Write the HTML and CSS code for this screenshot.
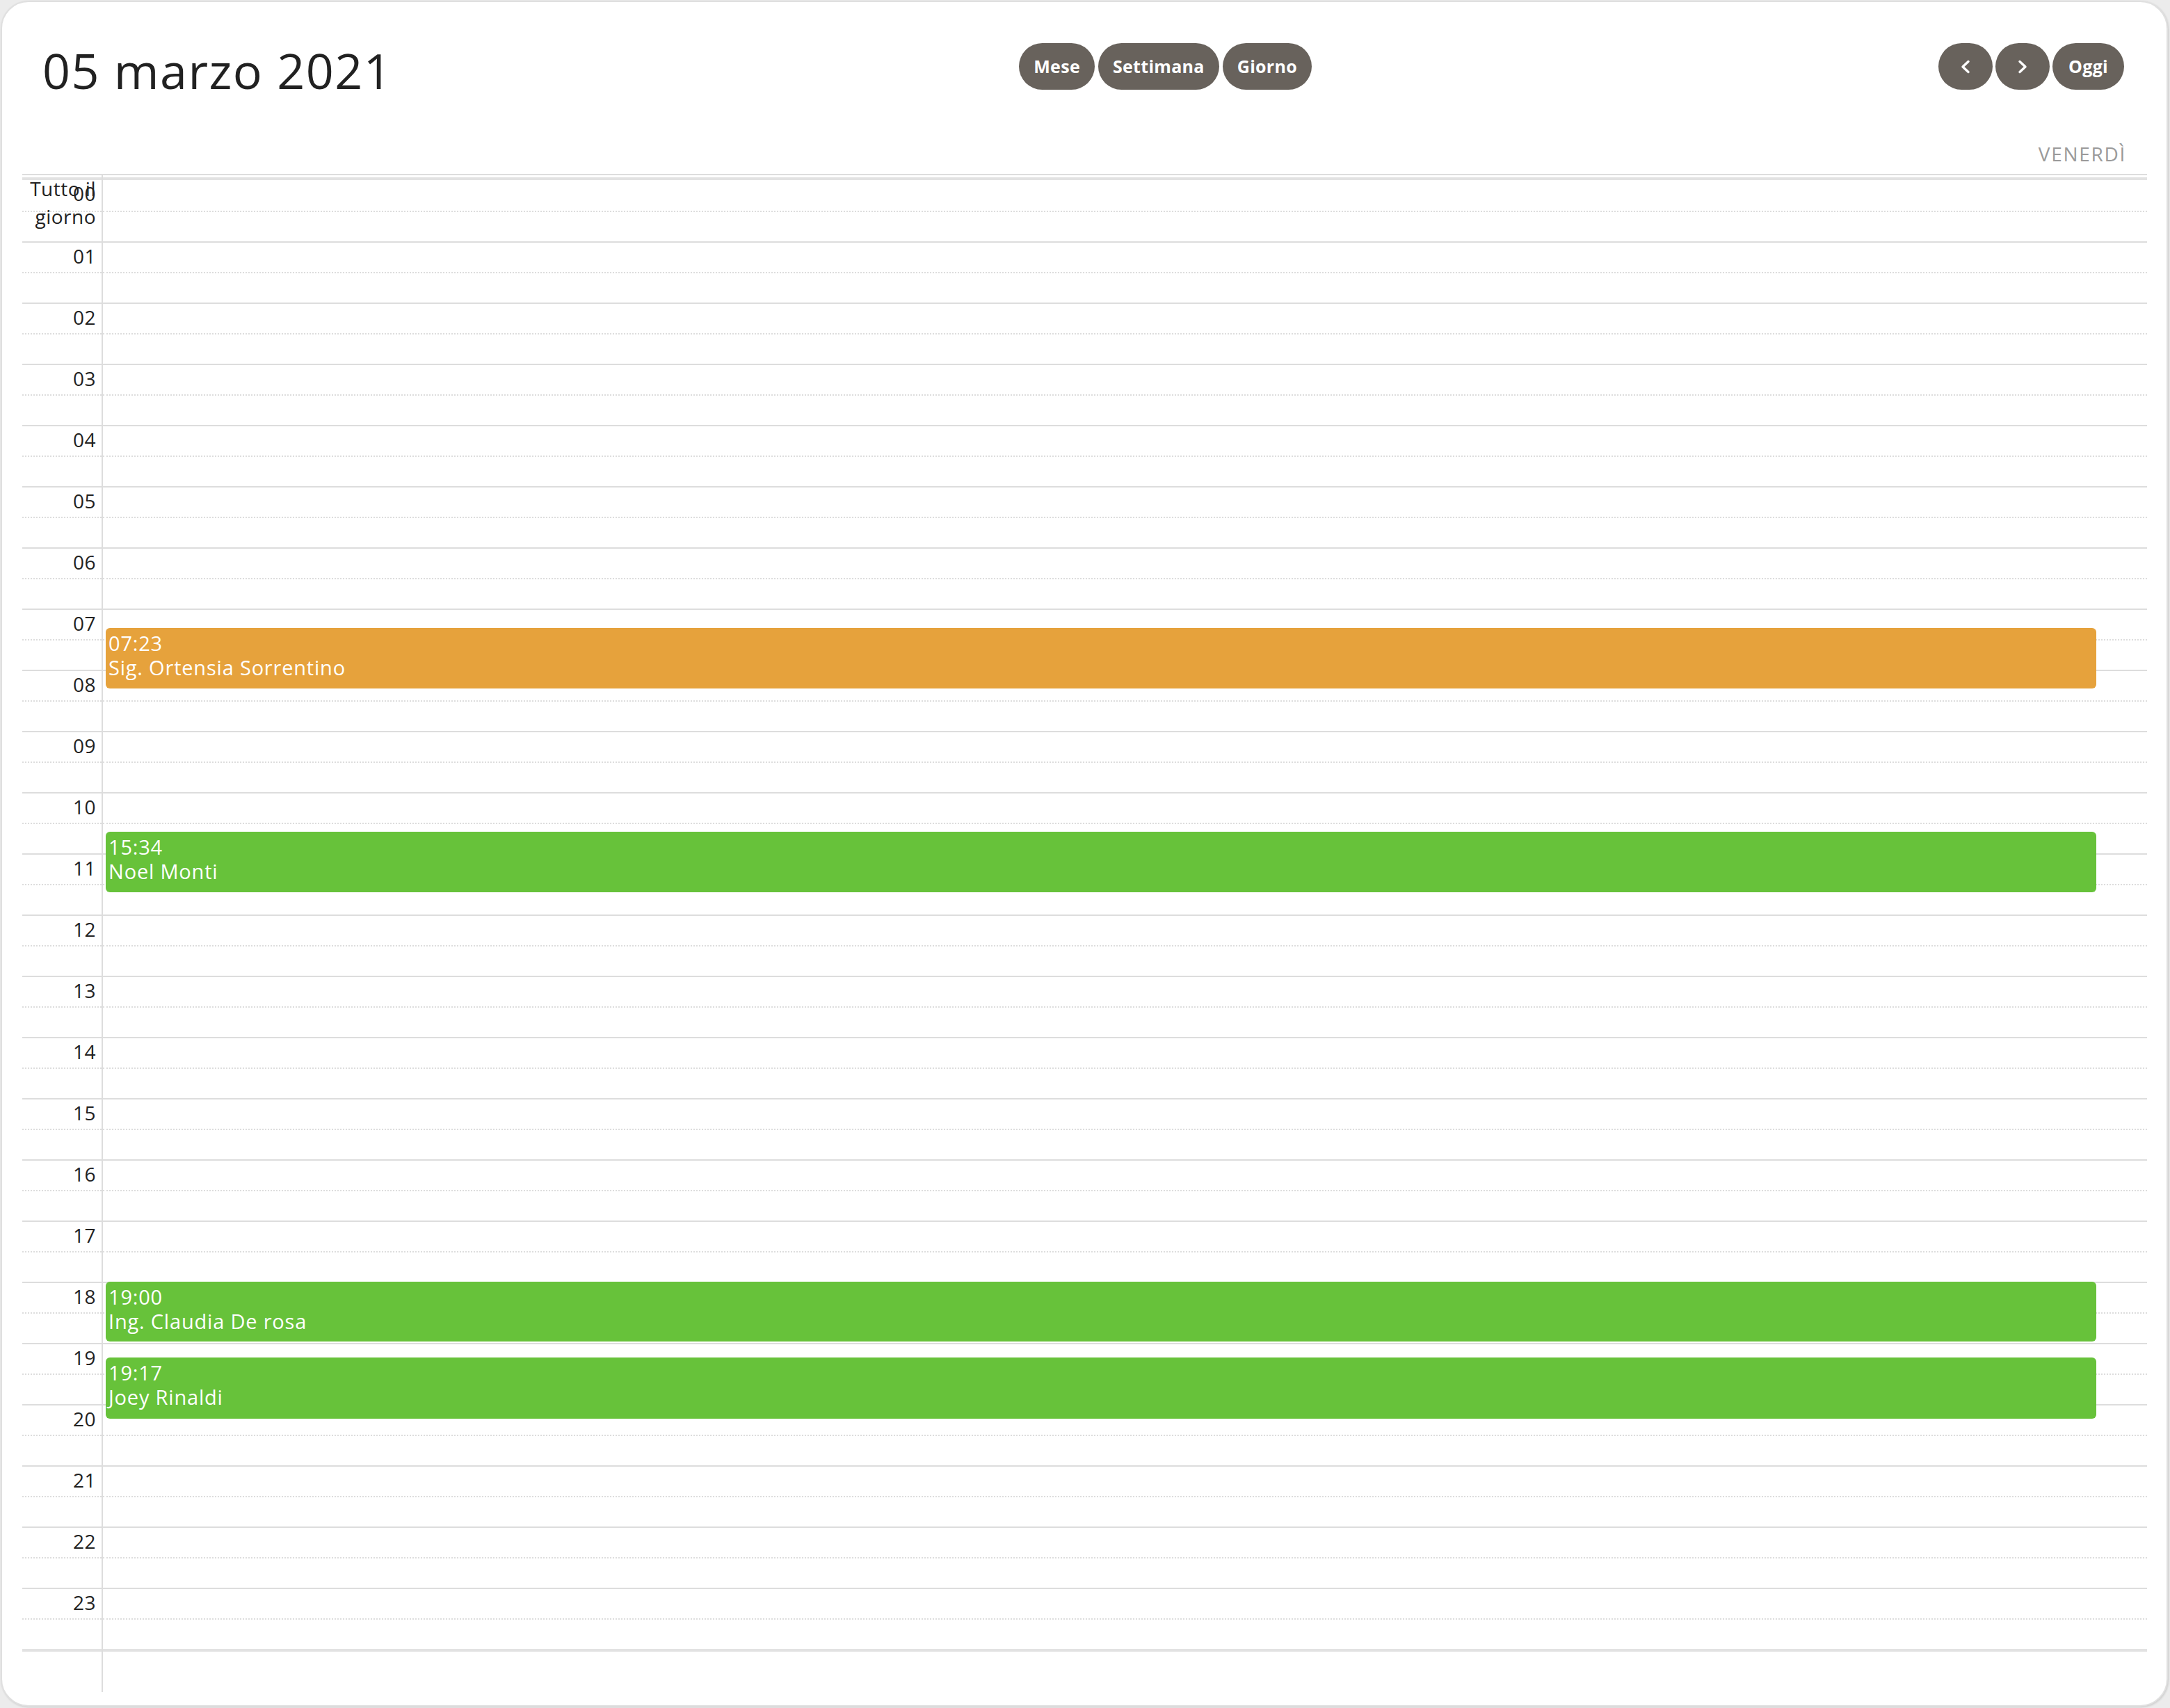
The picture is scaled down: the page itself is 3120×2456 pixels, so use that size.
FILE: index.html
```html
<!DOCTYPE html>
<html lang="it">
<head>
<meta charset="utf-8">
<title>Calendario</title>
<link rel="stylesheet" href="styles.css">
</head>
<body>
<div class="card">
  <div class="toolbar">
    <h2 class="title">05 marzo 2021</h2>
    <div class="btn-group">
      <button class="btn">Mese</button>
      <button class="btn">Settimana</button>
      <button class="btn">Giorno</button>
    </div>
    <div class="btn-group nav">
      <button class="btn btn-icon" aria-label="prev"><svg width="16" height="20" viewBox="0 0 16 20"><path d="M12 2.5 L4 10 L12 17.5" fill="none" stroke="#fff" stroke-width="3.4" stroke-linecap="round" stroke-linejoin="round"/></svg></button>
      <button class="btn btn-icon" aria-label="next"><svg width="16" height="20" viewBox="0 0 16 20"><path d="M4 2.5 L12 10 L4 17.5" fill="none" stroke="#fff" stroke-width="3.4" stroke-linecap="round" stroke-linejoin="round"/></svg></button>
      <button class="btn btn-today">Oggi</button>
    </div>
  </div>
  <div class="grid">
    <div class="col-header">VENERDÌ</div>
    <div class="tg-body">
      <div class="axis">
        <div class="allday">Tutto il<br>giorno</div>
        <div class="gap"></div><div class="divider"></div>
        <div class="hour h0"><div class="half top"><span class="label">00</span></div><div class="half bot"></div></div>
        <div class="hour"><div class="half top"><span class="label">01</span></div><div class="half bot"></div></div>
        <div class="hour"><div class="half top"><span class="label">02</span></div><div class="half bot"></div></div>
        <div class="hour"><div class="half top"><span class="label">03</span></div><div class="half bot"></div></div>
        <div class="hour"><div class="half top"><span class="label">04</span></div><div class="half bot"></div></div>
        <div class="hour"><div class="half top"><span class="label">05</span></div><div class="half bot"></div></div>
        <div class="hour"><div class="half top"><span class="label">06</span></div><div class="half bot"></div></div>
        <div class="hour"><div class="half top"><span class="label">07</span></div><div class="half bot"></div></div>
        <div class="hour"><div class="half top"><span class="label">08</span></div><div class="half bot"></div></div>
        <div class="hour"><div class="half top"><span class="label">09</span></div><div class="half bot"></div></div>
        <div class="hour"><div class="half top"><span class="label">10</span></div><div class="half bot"></div></div>
        <div class="hour"><div class="half top"><span class="label">11</span></div><div class="half bot"></div></div>
        <div class="hour"><div class="half top"><span class="label">12</span></div><div class="half bot"></div></div>
        <div class="hour"><div class="half top"><span class="label">13</span></div><div class="half bot"></div></div>
        <div class="hour"><div class="half top"><span class="label">14</span></div><div class="half bot"></div></div>
        <div class="hour"><div class="half top"><span class="label">15</span></div><div class="half bot"></div></div>
        <div class="hour"><div class="half top"><span class="label">16</span></div><div class="half bot"></div></div>
        <div class="hour"><div class="half top"><span class="label">17</span></div><div class="half bot"></div></div>
        <div class="hour"><div class="half top"><span class="label">18</span></div><div class="half bot"></div></div>
        <div class="hour"><div class="half top"><span class="label">19</span></div><div class="half bot"></div></div>
        <div class="hour"><div class="half top"><span class="label">20</span></div><div class="half bot"></div></div>
        <div class="hour"><div class="half top"><span class="label">21</span></div><div class="half bot"></div></div>
        <div class="hour"><div class="half top"><span class="label">22</span></div><div class="half bot"></div></div>
        <div class="hour"><div class="half top"><span class="label">23</span></div><div class="half bot"></div></div>
        <div class="end"></div>
      </div>
      <div class="lane">
        <div class="gap"></div><div class="divider"></div>
        <div class="hour h0"><div class="half top"></div><div class="half bot"></div></div>
        <div class="hour"><div class="half top"></div><div class="half bot"></div></div>
        <div class="hour"><div class="half top"></div><div class="half bot"></div></div>
        <div class="hour"><div class="half top"></div><div class="half bot"></div></div>
        <div class="hour"><div class="half top"></div><div class="half bot"></div></div>
        <div class="hour"><div class="half top"></div><div class="half bot"></div></div>
        <div class="hour"><div class="half top"></div><div class="half bot"></div></div>
        <div class="hour"><div class="half top"></div><div class="half bot"></div></div>
        <div class="hour"><div class="half top"></div><div class="half bot"></div></div>
        <div class="hour"><div class="half top"></div><div class="half bot"></div></div>
        <div class="hour"><div class="half top"></div><div class="half bot"></div></div>
        <div class="hour"><div class="half top"></div><div class="half bot"></div></div>
        <div class="hour"><div class="half top"></div><div class="half bot"></div></div>
        <div class="hour"><div class="half top"></div><div class="half bot"></div></div>
        <div class="hour"><div class="half top"></div><div class="half bot"></div></div>
        <div class="hour"><div class="half top"></div><div class="half bot"></div></div>
        <div class="hour"><div class="half top"></div><div class="half bot"></div></div>
        <div class="hour"><div class="half top"></div><div class="half bot"></div></div>
        <div class="hour"><div class="half top"></div><div class="half bot"></div></div>
        <div class="hour"><div class="half top"></div><div class="half bot"></div></div>
        <div class="hour"><div class="half top"></div><div class="half bot"></div></div>
        <div class="hour"><div class="half top"></div><div class="half bot"></div></div>
        <div class="hour"><div class="half top"></div><div class="half bot"></div></div>
        <div class="hour"><div class="half top"></div><div class="half bot"></div></div>
        <div class="end"></div>

        <div class="event ev-orange" style="top:651px;height:87px"><div class="ev-time">07:23</div><div class="ev-title">Sig. Ortensia Sorrentino</div></div>
        <div class="event ev-green" style="top:944px;height:87px"><div class="ev-time">15:34</div><div class="ev-title">Noel Monti</div></div>
        <div class="event ev-green" style="top:1591px;height:86px"><div class="ev-time">19:00</div><div class="ev-title">Ing. Claudia De rosa</div></div>
        <div class="event ev-green" style="top:1700px;height:88px"><div class="ev-time">19:17</div><div class="ev-title">Joey Rinaldi</div></div>
      </div>
    </div>
  </div>
</div>
</body>
</html>
```
FILE: styles.css
```css
* { box-sizing: border-box; }
html, body { margin: 0; height: 100%; }
body {
  background: #ececec;
  font-family: "Open Sans", "Liberation Sans", sans-serif;
  color: #222;
}
.card {
  margin: 1px 3px 2px 1px;
  height: calc(100% - 3px);
  background: #fff;
  border: 2px solid #e0e0e0;
  border-radius: 40px;
  box-shadow: 1px 1px 3px rgba(0, 0, 0, 0.15);
  padding: 50px 28px 19px 29px;
  display: flex;
  flex-direction: column;
}
.toolbar {
  display: flex;
  justify-content: space-between;
  align-items: flex-start;
  padding: 0 33px 0 29px;
}
.title {
  margin: 0;
  font-size: 70px;
  font-weight: 400;
  line-height: 96px;
  letter-spacing: 1.5px;
  color: #212121;
}
.btn-group {
  display: flex;
  gap: 5px;
  margin-top: 9px;
}
.btn-group.nav { gap: 4px; }
.btn {
  height: 67px;
  padding: 0 21px;
  border: 0;
  border-radius: 34px;
  background: #68625c;
  color: #fff;
  font-family: inherit;
  font-weight: 700;
  font-size: 25px;
  line-height: 67px;
  letter-spacing: 0.3px;
}
.btn-today { padding: 0 23px; }
.btn-icon {
  width: 78px;
  padding: 0;
  display: flex;
  align-items: center;
  justify-content: center;
}
.grid {
  flex: 1;
  display: flex;
  flex-direction: column;
}
.col-header {
  margin-top: 53px;
  height: 50px;
  padding: 0 30px 10px 0;
  border-bottom: 2px solid #ddd;
  text-align: right;
  font-size: 28px;
  line-height: 38px;
  color: #9a9a9a;
  letter-spacing: 1.7px;
}
.tg-body {
  flex: 1;
  display: flex;
}
.axis {
  width: 116px;
  border-right: 2px solid #ddd;
  position: relative;
}
.lane {
  flex: 1;
  position: relative;
}
.gap { height: 3px; }
.divider { height: 4px; background: #e2e2e2; }
.half { height: 44px; }
.half.top { border-top: 2px solid #ddd; }
.half.bot { border-top: 2px dotted #ddd; }
.h0 .half.top { border-top: 0; }
.end { border-top: 4px solid #e2e2e2; }
.label {
  display: block;
  text-align: right;
  padding-right: 8px;
  font-size: 28px;
  line-height: 38px;
  letter-spacing: 0.5px;
  color: #222;
}
.allday {
  position: absolute;
  top: -1px;
  right: 8px;
  text-align: right;
  font-size: 28px;
  line-height: 40px;
  letter-spacing: 0.5px;
  color: #222;
}
.event {
  position: absolute;
  left: 4px;
  right: 2.5%;
  border-radius: 6px;
  color: #fff;
  padding: 4px 4px;
  font-size: 29px;
  line-height: 35px;
  letter-spacing: 0.8px;
  overflow: hidden;
}
.ev-orange { background: #e6a23c; }
.ev-green { background: #67c23a; }
```
